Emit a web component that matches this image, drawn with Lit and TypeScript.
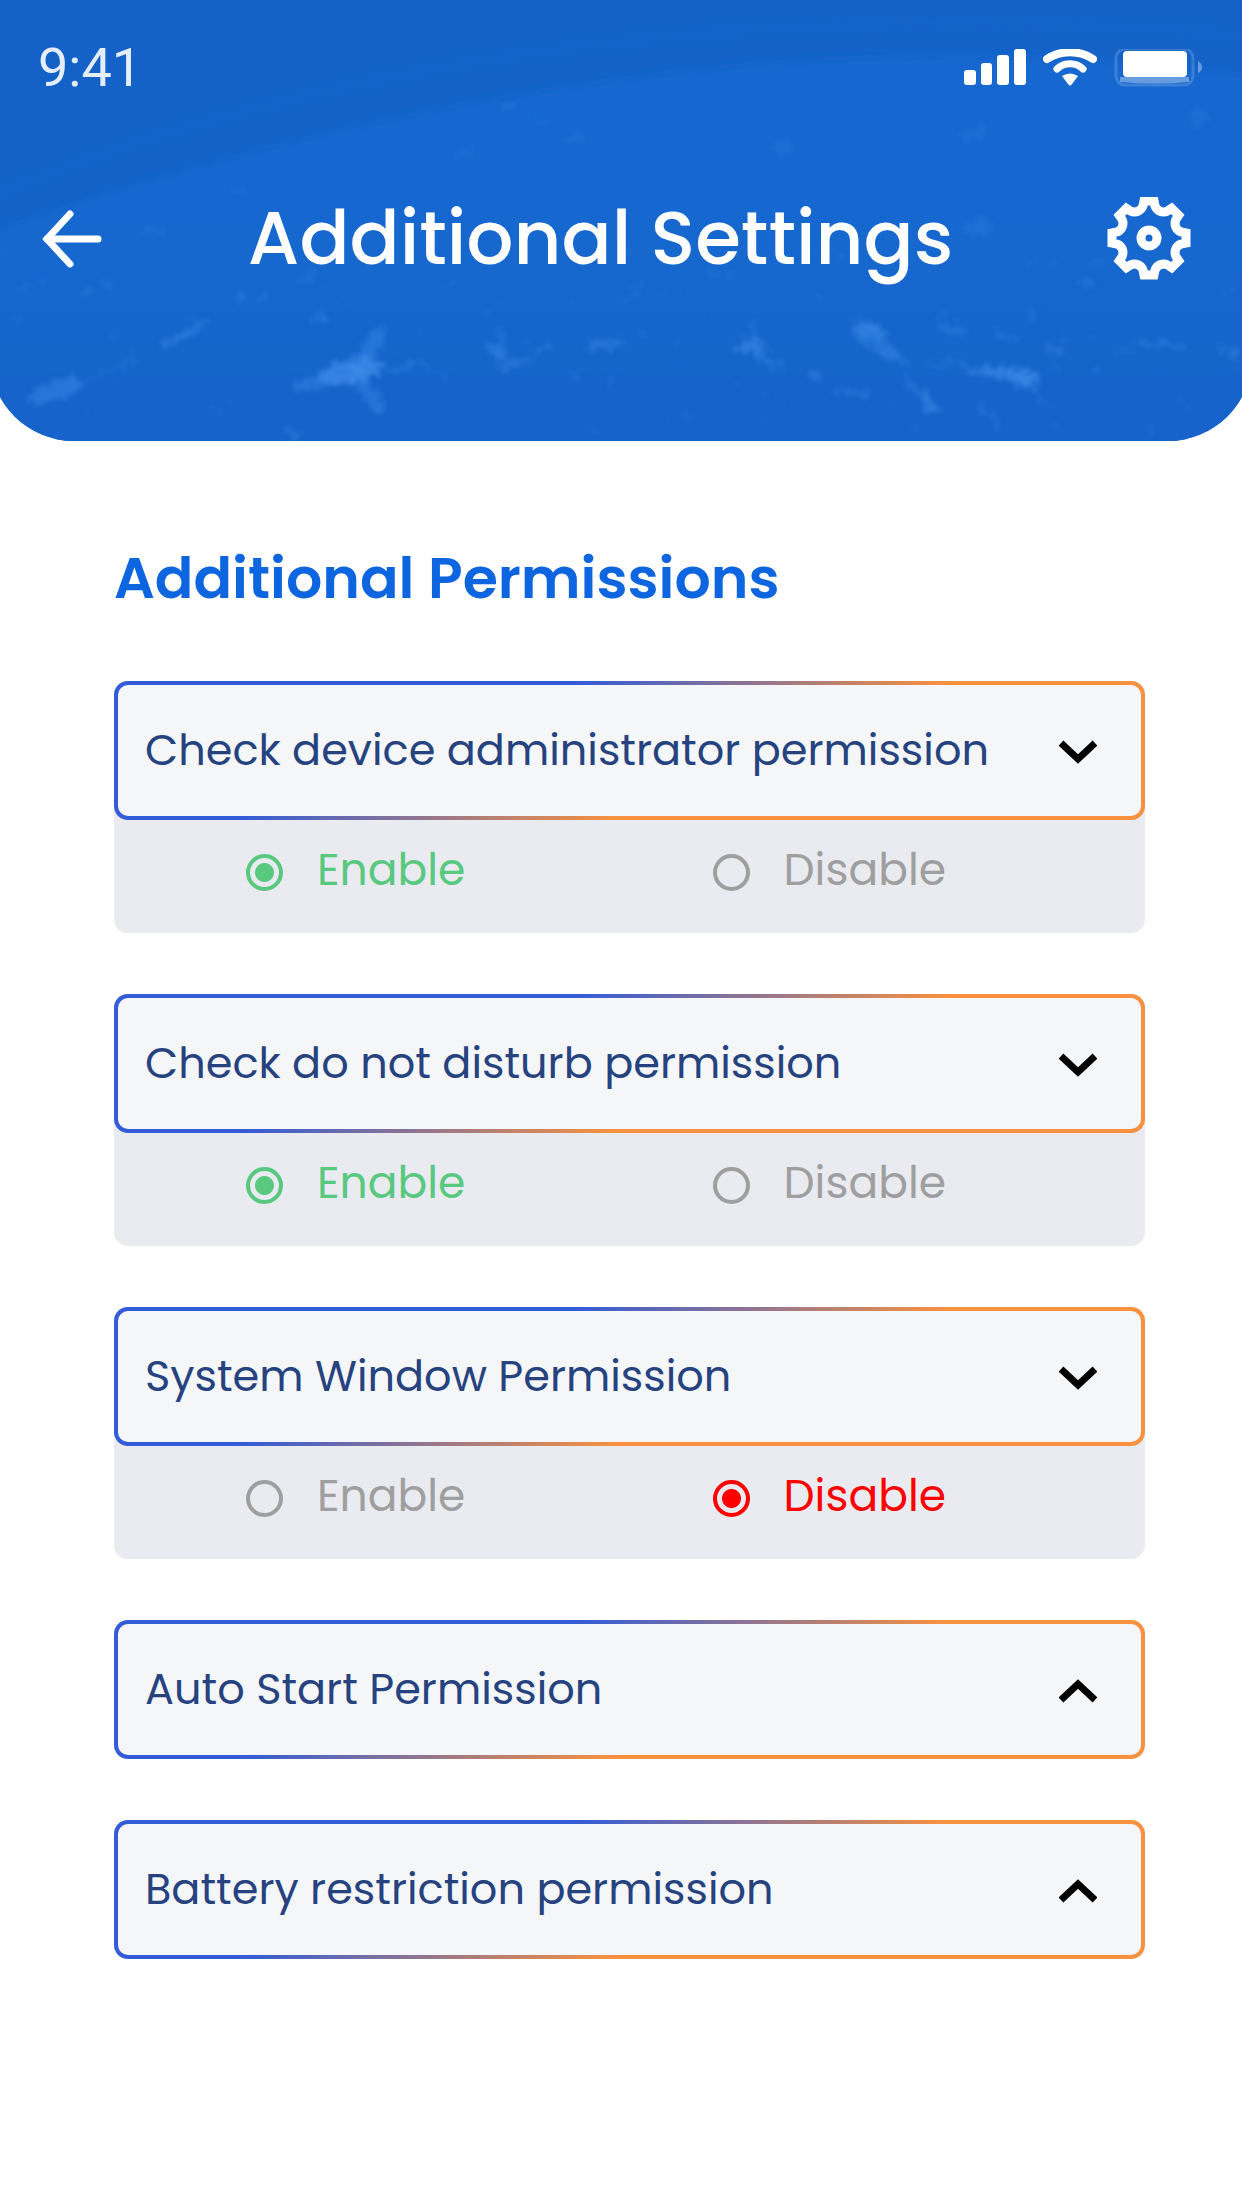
import { LitElement, html, css, svg, nothing } from "lit";
import { customElement, property, state } from "lit/decorators.js";

type Choice = "enable" | "disable";

interface Permission {
  id: string;
  label: string;
  open: boolean;
  choice: Choice;
}

/* City-light streaks on the globe: cx, cy, rx, ry, rotation, opacity */
const STREAKS: number[][] = [
  [55, 391, 28, 9, -18, 0.4],
  [110, 370, 45, 2, -24, 0.22],
  [186, 333, 28, 4, -30, 0.4],
  [30, 286, 20, 3, -20, 0.22],
  [88, 293, 8, 3, -20, 0.26],
  [240, 297, 9, 3, 0, 0.3],
  [264, 297, 8, 3, -10, 0.3],
  [308, 275, 12, 3, -25, 0.25],
  [318, 318, 7, 5, 0, 0.35],
  [350, 372, 30, 13, -10, 0.5],
  [340, 376, 48, 8, -14, 0.35],
  [368, 352, 30, 9, -58, 0.35],
  [366, 390, 24, 8, 48, 0.35],
  [404, 367, 18, 4, -15, 0.35],
  [378, 410, 9, 3, -15, 0.35],
  [292, 433, 7, 6, 30, 0.3],
  [218, 413, 6, 3, 0, 0.22],
  [498, 351, 12, 6, 40, 0.42],
  [512, 364, 15, 4, -20, 0.38],
  [501, 338, 4, 10, 0, 0.22],
  [541, 350, 9, 4, -20, 0.35],
  [604, 344, 18, 5, -4, 0.38],
  [637, 288, 8, 4, 10, 0.2],
  [622, 302, 9, 3, 0, 0.18],
  [577, 375, 6, 3, 0, 0.22],
  [724, 276, 12, 3, 0, 0.22],
  [675, 344, 5, 3, 0, 0.28],
  [751, 346, 13, 8, -10, 0.5],
  [768, 360, 22, 4, 38, 0.35],
  [753, 328, 5, 10, 0, 0.22],
  [814, 378, 12, 3, 35, 0.3],
  [868, 330, 19, 7, 15, 0.55],
  [878, 345, 26, 6, 25, 0.32],
  [896, 358, 14, 4, 25, 0.3],
  [952, 330, 14, 4, 10, 0.35],
  [944, 316, 3, 14, -15, 0.2],
  [1006, 337, 12, 4, 10, 0.3],
  [1055, 350, 10, 4, 20, 0.3],
  [1012, 374, 32, 7, 6, 0.55],
  [1024, 382, 16, 6, 18, 0.4],
  [972, 370, 16, 3, 30, 0.38],
  [944, 364, 20, 2, 0, 0.3],
  [920, 392, 24, 4, 45, 0.3],
  [928, 404, 10, 5, 20, 0.42],
  [852, 392, 20, 3, 8, 0.3],
  [990, 416, 18, 3, 48, 0.3],
  [1045, 403, 14, 2, 25, 0.18],
  [1160, 345, 28, 3, 3, 0.32],
  [1118, 350, 16, 2, -5, 0.18],
  [1231, 352, 12, 4, 15, 0.32],
  [1087, 283, 13, 3, 5, 0.25],
  [1062, 333, 4, 4, 0, 0.25],
  [1031, 315, 5, 4, 0, 0.22],
  [1098, 263, 9, 3, -30, 0.18],
  [978, 228, 16, 8, 0, 0.18],
  [974, 134, 14, 6, -10, 0.16],
  [1200, 116, 10, 8, 0, 0.12],
  [782, 148, 12, 6, 0, 0.12],
  [576, 138, 12, 4, -10, 0.16],
  [541, 123, 8, 3, 0, 0.2],
  [508, 105, 5, 3, 0, 0.32],
  [464, 153, 14, 4, -20, 0.12],
  [240, 191, 8, 3, -10, 0.2],
  [152, 230, 10, 3, -15, 0.2],
];

/* Faint dots scattered between the streaks, repeatable on every render. */
const DOTS: number[][] = (() => {
  let seed = 11;
  const next = () => (seed = (seed * 16807) % 2147483647) / 2147483647;
  return Array.from({ length: 110 }, () => [
    next() * 1242,
    250 + next() * 180,
    2 + next() * 4,
    1 + next() * 2,
    -20 + next() * 40,
    0.08 + next() * 0.14,
  ]);
})();

const rotate = (x: number, y: number, deg: number): string => {
  const a = (deg * Math.PI) / 180;
  const px = x * Math.cos(a) - y * Math.sin(a);
  const py = x * Math.sin(a) + y * Math.cos(a);
  return `${px.toFixed(2)},${py.toFixed(2)}`;
};

/* Eight flat-topped teeth joined by concave valleys. */
const gearPath = (): string => {
  const parts: string[] = [];
  for (let i = 0; i < 8; i++) {
    const d = i * 45;
    parts.push(
      `${i === 0 ? "M" : "L"}${rotate(-5, -37, d)} L${rotate(5, -37, d)} L${rotate(6, -32, d)} ` +
        `C${rotate(8, -27, d)} ${rotate(13.4, -24.7, d)} ${rotate(18.4, -26.9, d)}`
    );
  }
  return parts.join(" ") + "Z";
};

@customElement("status-bar")
class StatusBar extends LitElement {
  static styles = css`
    :host {
      display: flex;
      align-items: center;
      justify-content: space-between;
      height: 64px;
    }
    .time {
      font: 400 54px/64px Roboto, "Liberation Sans", sans-serif;
      color: #e4edfa;
    }
    .icons {
      display: flex;
      align-items: center;
      gap: 17px;
    }
    svg {
      display: block;
    }
  `;

  render() {
    return html`
      <span class="time">9:41</span>
      <div class="icons">
        <svg width="62" height="38" viewBox="0 0 62 38" fill="#fff" aria-hidden="true">
          <rect x="0" y="21" width="12" height="15" rx="3" />
          <rect x="17" y="14" width="11" height="22" rx="3" />
          <rect x="33" y="6" width="12" height="30" rx="3" />
          <rect x="50" y="0" width="12" height="36" rx="3" />
        </svg>
        <svg width="54" height="38" viewBox="0 0 54 38" aria-hidden="true">
          <path d="M4 10C17 1 37 1 50 10" fill="none" stroke="#fff" stroke-width="8" stroke-linecap="round" />
          <path d="M14 20C21 13 33 13 40 20" fill="none" stroke="#fff" stroke-width="7" stroke-linecap="round" />
          <path d="M19 27Q27 22 35 27L29 35Q27 38 25 35Z" fill="#fff" />
        </svg>
        <svg width="90" height="38" viewBox="0 0 90 38" fill="#fff" aria-hidden="true">
          <rect x="2" y="0" width="77" height="36" rx="9" fill="none" stroke="#fff" stroke-width="3" opacity="0.16" />
          <path d="M6 28H75V33Q40 36 6 33Z" opacity="0.35" />
          <rect x="9" y="2" width="64" height="26" rx="4" />
          <path d="M84 12Q88 14 88 18T84 24Z" opacity="0.35" />
        </svg>
      </div>
    `;
  }
}

@customElement("settings-header")
class SettingsHeader extends LitElement {
  static styles = css`
    :host {
      display: block;
      position: relative;
      padding: 36px 38px 161px;
    }
    .backdrop {
      position: absolute;
      inset: 0 -10px;
      overflow: hidden;
      border-radius: 0 0 84px 84px;
      background: #1462c8;
    }
    .backdrop svg {
      display: block;
      width: 100%;
      height: 100%;
    }
    .content {
      position: relative;
      display: flex;
      flex-direction: column;
      gap: 97px;
    }
    .bar {
      display: flex;
      align-items: center;
      justify-content: space-between;
      height: 83px;
      padding: 0 13px 0 4px;
    }
    h1 {
      margin: 0;
      font-size: 74px;
      font-weight: 500;
      line-height: 83px;
      white-space: nowrap;
      color: #fff;
    }
    button {
      display: block;
      padding: 0;
      border: 0;
      background: none;
      cursor: pointer;
    }
    button svg {
      display: block;
    }
  `;

  render() {
    return html`
      <div class="backdrop">
        <svg viewBox="-10 0 1262 441" preserveAspectRatio="none" aria-hidden="true">
          <defs>
            <linearGradient id="globe" x1="0" y1="0" x2="0" y2="1">
              <stop offset="0" stop-color="#1968d0" />
              <stop offset="0.35" stop-color="#1968d0" />
              <stop offset="0.65" stop-color="#1565cc" />
              <stop offset="1" stop-color="#1563ca" />
            </linearGradient>
            <filter id="haze" x="-5%" y="-5%" width="110%" height="110%">
              <feGaussianBlur stdDeviation="5" />
            </filter>
            <filter id="rough" x="-5%" y="-5%" width="110%" height="110%">
              <feTurbulence type="fractalNoise" baseFrequency="0.13" numOctaves="3" seed="4" />
              <feDisplacementMap in="SourceGraphic" scale="22" xChannelSelector="R" yChannelSelector="G" />
              <feGaussianBlur stdDeviation="2" />
            </filter>
          </defs>
          <path
            d="M-40 210C180 112 480 38 860 24C1020 20 1160 26 1280 40"
            fill="none" stroke="#1868d0" stroke-width="8" opacity="0.3" filter="url(#haze)"
          />
          <path
            d="M-40 245C180 162 480 84 800 62C1000 50 1160 60 1280 82V470H-40Z"
            fill="url(#globe)" filter="url(#haze)"
          />
          <g fill="#4591ee" filter="url(#rough)">
            ${[...STREAKS, ...DOTS].map(
              ([x, y, rx, ry, r, o]) => svg`<ellipse
                cx=${x} cy=${y} rx=${rx} ry=${ry} opacity=${o} transform="rotate(${r} ${x} ${y})" />`
            )}
          </g>
        </svg>
      </div>
      <div class="content">
        <status-bar></status-bar>
        <div class="bar">
          <button type="button" aria-label="Back">
            <svg width="60" height="60" viewBox="0 0 60 60" fill="none" stroke="#fff" stroke-width="7" aria-hidden="true">
              <path d="M5 30H56" stroke-linecap="round" />
              <path d="M28 5L5 30L28 55" stroke-linecap="round" stroke-linejoin="miter" />
            </svg>
          </button>
          <h1>Additional Settings</h1>
          <button type="button" aria-label="Settings">
            <svg width="92" height="83" viewBox="-50 -41 92 83" fill="none" stroke="#fff" stroke-width="9" aria-hidden="true">
              <path d=${gearPath()} />
              <circle r="8" />
            </svg>
          </button>
        </div>
      </div>
    `;
  }
}

@customElement("permission-item")
class PermissionItem extends LitElement {
  @property({ attribute: false }) item!: Permission;

  static styles = css`
    :host {
      display: block;
    }
    .group {
      border-radius: 14px;
    }
    .group.open {
      background: #e9ebf1;
    }
    .toggle {
      box-sizing: border-box;
      display: flex;
      align-items: center;
      justify-content: space-between;
      width: 100%;
      min-height: 139px;
      padding: 0 44px 2px 27px;
      border: 4px solid transparent;
      border-radius: 14px;
      background:
        linear-gradient(#f4f6f8, #f4f6f8) padding-box,
        linear-gradient(158deg, #335cd8 34%, #f79140 61%) border-box;
      font: inherit;
      font-size: 43px;
      line-height: 60px;
      text-align: left;
      color: #26437f;
      cursor: pointer;
    }
    .toggle svg {
      flex: none;
      display: block;
    }
    .choices {
      display: grid;
      grid-template-columns: 1fr 1fr;
      column-gap: 34px;
      margin: 0;
      padding: 20px 0 33px 132px;
      border: 0;
    }
    .choice {
      display: flex;
      align-items: center;
      gap: 34px;
      font-size: 44px;
      line-height: 60px;
      color: #9f9f9f;
      cursor: pointer;
    }
    .choice.on.enable {
      color: #58c97e;
    }
    .choice.on.disable {
      color: #ff0000;
    }
    input {
      appearance: none;
      box-sizing: border-box;
      flex: none;
      width: 37px;
      height: 37px;
      margin: 4px 0 0;
      border: 4px solid currentColor;
      border-radius: 50%;
      color: inherit;
      cursor: pointer;
    }
    input:checked {
      background: radial-gradient(circle, currentColor 9px, transparent 10px);
    }
  `;

  private choose(choice: Choice) {
    this.item = { ...this.item, choice };
  }

  private toggle() {
    this.item = { ...this.item, open: !this.item.open };
  }

  private renderChoice(choice: Choice, text: string) {
    const on = this.item.choice === choice;
    return html`
      <label class="choice ${choice} ${on ? "on" : ""}">
        <input
          type="radio"
          name=${this.item.id}
          .checked=${on}
          @change=${() => this.choose(choice)}
        />
        <span>${text}</span>
      </label>
    `;
  }

  render() {
    const { label, open } = this.item;
    return html`
      <div class="group ${open ? "open" : ""}">
        <button class="toggle" type="button" aria-expanded=${open ? "true" : "false"} @click=${this.toggle}>
          <span>${label}</span>
          <svg width="38" height="28" viewBox="0 0 38 28" fill="none" stroke="#000" stroke-width="7" aria-hidden="true">
            <path d=${open ? "M2 7L19 23L36 7" : "M2 25L19 9L36 25"} />
          </svg>
        </button>
        ${open
          ? html`<fieldset class="choices" aria-label=${label}>
              ${this.renderChoice("enable", "Enable")} ${this.renderChoice("disable", "Disable")}
            </fieldset>`
          : nothing}
      </div>
    `;
  }
}

@customElement("app-root")
class AppRoot extends LitElement {
  @state() private items: Permission[] = [
    { id: "admin", label: "Check device administrator permission", open: true, choice: "enable" },
    { id: "dnd", label: "Check do not disturb permission", open: true, choice: "enable" },
    { id: "window", label: "System Window Permission", open: true, choice: "disable" },
    { id: "autostart", label: "Auto Start Permission", open: false, choice: "enable" },
    { id: "battery", label: "Battery restriction permission", open: false, choice: "enable" },
  ];

  static styles = css`
    :host {
      display: block;
      min-height: 100vh;
      overflow: hidden;
      background: #fff;
      font-family: Poppins, Inter, "Liberation Sans", sans-serif;
    }
    main {
      padding: 97px 97px 97px 114px;
    }
    h2 {
      margin: 0 0 63px;
      font-size: 57px;
      font-weight: 600;
      line-height: 80px;
      color: #0d66e0;
    }
    .list {
      display: flex;
      flex-direction: column;
      gap: 61px;
    }
  `;

  render() {
    return html`
      <settings-header></settings-header>
      <main>
        <h2>Additional Permissions</h2>
        <div class="list">
          ${this.items.map((item) => html`<permission-item .item=${item}></permission-item>`)}
        </div>
      </main>
    `;
  }
}
